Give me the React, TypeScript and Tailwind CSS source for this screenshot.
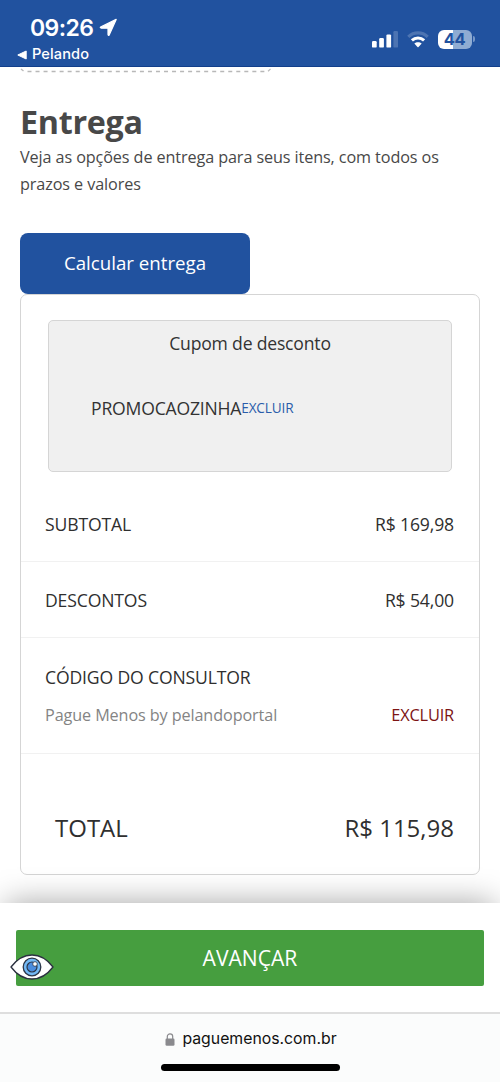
import React from 'react';

const SignalIcon = () => (
  <svg width="26" height="17" viewBox="0 0 26 17" fill="#fff" aria-hidden="true">
    <rect x="0" y="10" width="4.7" height="6.6" rx="1.2" />
    <rect x="7.2" y="7" width="4.7" height="9.6" rx="1.2" />
    <rect x="14.4" y="3.4" width="4.7" height="13.2" rx="1.2" />
    <rect x="21.4" y="0" width="4.6" height="16.6" rx="1.2" opacity="0.2" />
  </svg>
);

const WifiIcon = () => (
  <svg width="22" height="17" viewBox="0 0 22 17" aria-hidden="true">
    <path d="M1.3 5.8 C6.8 0.6 15.2 0.6 20.7 5.8" fill="none" stroke="#fff" strokeWidth="3.2" opacity="0.2" />
    <path d="M4.9 9.4 C8.4 6.2 13.6 6.2 17.1 9.4" fill="none" stroke="#fff" strokeWidth="3.1" />
    <path d="M7.3 12.6 C9.4 10.8 12.6 10.8 14.7 12.6 L11.5 15.9 Q11 16.4 10.5 15.9 Z" fill="#fff" />
  </svg>
);

const Battery = () => (
  <div className="flex items-center gap-px">
    <div className="flex h-[19px] w-[34px] items-center justify-center rounded-[6px] bg-[linear-gradient(90deg,#fff_44%,#8facd3_44%)] pr-px font-['Inter'] text-[16.5px] leading-none font-bold tracking-[-0.4px] text-[#21529f]">
      44
    </div>
    <div className="h-[6px] w-[2px] rounded-r-full bg-[#7798c8]" />
  </div>
);

const StatusBar = () => (
  <header className="flex h-[67px] shrink-0 justify-between border-b border-[#123f8b] bg-[#21529f] text-white">
    <div className="pt-[14px] pl-[17px] font-['Inter',sans-serif]">
      <div className="flex h-[27px] items-center pl-[13px]">
        <span className="w-[69px] pt-px text-[23px] font-semibold tracking-[-0.6px]">09:26</span>
        <svg width="19" height="19" viewBox="0 0 19 19" aria-hidden="true">
          <path d="M17.2 1.4 L10.3 16.8 Q9.3 18.2 9 16.5 V10.2 H2.5 Q0.3 9.8 2 8.7 Z" fill="#fff" stroke="#fff" strokeWidth="1.2" strokeLinejoin="round" />
        </svg>
      </div>
      <div className="flex h-[25px] items-center gap-[5px] pt-[2px]">
        <svg width="10" height="10" viewBox="0 0 10 10" aria-hidden="true">
          <path d="M0.8 5 L9.2 1 V9 Z" fill="#fff" stroke="#fff" strokeLinejoin="round" />
        </svg>
        <span className="text-[14.6px] font-medium tracking-[0.1px]">Pelando</span>
      </div>
    </div>
    <div className="mt-[29px] mr-[25px] flex h-[20px] items-center gap-[9px]">
      <SignalIcon />
      <WifiIcon />
      <Battery />
    </div>
  </header>
);

interface SummaryRowProps {
  label: string;
  value: string;
}

const SummaryRow: React.FC<SummaryRowProps> = ({ label, value }) => (
  <div className="flex h-[76px] items-center justify-between border-b border-[#f1f1f1] pt-[2px] pr-[25px] pl-[24px] text-[17.6px] tracking-[-0.15px] text-[#2f2f2f]">
    <span>{label}</span>
    <span>{value}</span>
  </div>
);

const OrderSummary = () => (
  <section className="flex h-[581px] flex-col rounded-[7px] border border-[#d5d5d5] bg-white">
    <div className="mx-[27px] mt-[25px] flex h-[152px] shrink-0 flex-col rounded-[5px] border border-[#d5d5d5] bg-[#f0f0f0] text-[#333]">
      <h2 className="mt-[9px] text-center text-[17.6px] leading-[27px] tracking-[-0.2px]">Cupom de desconto</h2>
      <div className="mt-[37px] flex items-center pl-[42px] leading-[26px]">
        <span className="text-[17.6px] tracking-[-0.2px]">PROMOCAOZINHA</span>
        <a className="pt-px text-[13.6px] tracking-[-0.15px] text-[#2a5caa]">EXCLUIR</a>
      </div>
    </div>
    <div className="mt-[14px]">
      <SummaryRow label="SUBTOTAL" value="R$ 169,98" />
      <SummaryRow label="DESCONTOS" value="R$ 54,00" />
      <div className="h-[116px] border-b border-[#f1f1f1] pt-[26px] pr-[25px] pl-[24px] text-[17.6px] leading-[26px] tracking-[-0.15px] text-[#2f2f2f]">
        <p>CÓDIGO DO CONSULTOR</p>
        <div className="mt-[12px] flex justify-between">
          <span className="text-[16.2px] tracking-[-0.1px] text-[#848484]">Pague Menos by pelandoportal</span>
          <a className="text-[16.4px] tracking-[-0.2px] text-[#7d1414]">EXCLUIR</a>
        </div>
      </div>
    </div>
    <div className="flex items-center justify-between pt-[56px] pr-[25px] pl-[34px] text-[24px] leading-[36px] text-[#2f2f2f]">
      <span>TOTAL</span>
      <span>R$ 115,98</span>
    </div>
  </section>
);

const EyeIcon = () => (
  <svg width="44" height="28" viewBox="0 0 44 28" className="absolute top-[50px] left-[10px]" aria-hidden="true">
    <path d="M1 14 C13 -2 31 -2 43 14 C31 30 13 30 1 14 Z" fill="#fff" stroke="#2b3040" strokeWidth="1.3" strokeLinejoin="round" />
    <circle cx="22" cy="14" r="8.8" fill="#73b9f5" stroke="#2b3547" strokeWidth="1.3" />
    <circle cx="22" cy="14" r="5" fill="#4b8ddd" stroke="#2b3547" strokeWidth="1.2" />
    <circle cx="25" cy="11" r="2.3" fill="#fff" stroke="#2b3547" strokeWidth="0.8" />
  </svg>
);

const BrowserBar = () => (
  <footer className="relative flex h-[70px] shrink-0 flex-col items-center border-t-2 border-[#dedede] bg-[#fbfcfc]">
    <div className="mt-[12px] flex h-[26px] items-center gap-[7px] pl-[2px] font-['Inter',sans-serif]">
      <svg width="10" height="13" viewBox="0 0 10 13" aria-hidden="true">
        <rect x="0.5" y="5.4" width="9" height="7.4" rx="1.3" fill="#8a8a8e" />
        <path d="M2.3 6 V3.6 C2.3 0 7.7 0 7.7 3.6 V6" fill="none" stroke="#8a8a8e" strokeWidth="1.2" />
      </svg>
      <span className="text-[15.8px] text-[#111]">paguemenos.com.br</span>
    </div>
    <div className="mt-[12px] h-[7px] w-[179px] rounded-full bg-black" />
  </footer>
);

export default function App() {
  return (
    <div className="flex h-[1082px] w-[500px] flex-col overflow-hidden bg-white font-['Open_Sans',sans-serif]">
      <StatusBar />
      <main className="h-[836px] shrink-0 px-[20px]">
        <svg width="252" height="6" viewBox="0 0 252 6" aria-hidden="true">
          <path d="M1 2 L3.5 4" stroke="#bbb" strokeWidth="1.4" />
          <path d="M7.5 4.5 H248" stroke="#b8b8b8" strokeWidth="1.3" strokeDasharray="4 4.03" />
          <path d="M248 4.2 L250.5 2" stroke="#bbb" strokeWidth="1.2" />
        </svg>
        <h1 className="mt-[26px] text-[32.3px] leading-[44px] font-bold tracking-[-0.3px] text-[#484848]">Entrega</h1>
        <p className="mt-px h-[53px] text-[16.2px] leading-[27px] tracking-[-0.1px] whitespace-nowrap text-[#484848]">
          Veja as opções de entrega para seus itens, com todos os
          <br />
          prazos e valores
        </p>
        <button className="mt-[36px] flex h-[61px] w-[230px] items-center justify-center rounded-[8px] bg-[#21529f] text-[18.7px] text-white">
          Calcular entrega
        </button>
        <OrderSummary />
      </main>
      <div className="relative h-[109px] shrink-0 bg-white px-4 pt-[27px] shadow-[0_-6px_30px_-6px_rgba(0,0,0,0.36)]">
        <button className="flex h-[56px] w-full items-center justify-center rounded-[2px] bg-[#469e3f] text-[21.1px] text-white">
          AVANÇAR
        </button>
        <EyeIcon />
      </div>
      <BrowserBar />
    </div>
  );
}
